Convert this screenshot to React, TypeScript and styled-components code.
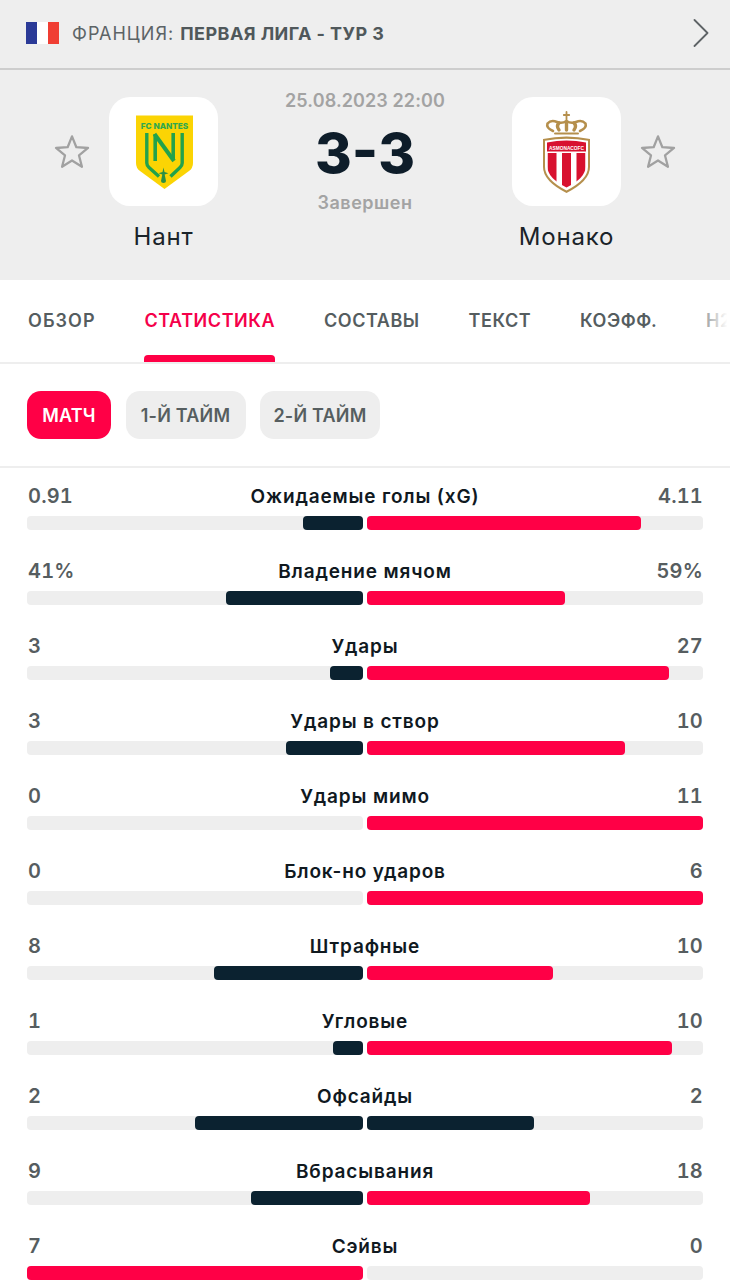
import React from "react";
import styled, { createGlobalStyle } from "styled-components";

const Global = createGlobalStyle`
  html, body { margin: 0; padding: 0; background: #fff; }
  body { width: 730px; height: 1280px; overflow: hidden; font-family: Inter, "Noto Sans", "Liberation Sans", sans-serif; }
  * { box-sizing: border-box; }
`;

const Page = styled.div`
  width: 730px;
  height: 1280px;
  overflow: hidden;
  background: #fff;
`;

const Top = styled.header`
  background: #eeeeee;
  height: 280px;
`;

const LeagueBar = styled.div`
  height: 70px;
  border-bottom: 2px solid #cdcdcd;
  display: flex;
  align-items: center;
  padding: 0 21px 2px 26px;
`;

const Flag = styled.div`
  width: 33px;
  height: 22px;
  display: flex;
  flex: none;
  margin-right: 13px;
`;

const FlagBand = styled.span<{ $c: string }>`
  flex: 1;
  background: ${(p) => p.$c};
`;

const LeagueText = styled.div`
  flex: 1;
  font-size: 18px;
  letter-spacing: 1px;
  color: #5c6366;
  white-space: nowrap;
  b { font-weight: 700; color: #50585b; letter-spacing: 0.42px; }
`;

const MatchGrid = styled.section`
  display: grid;
  grid-template-columns: 36px 109px 1fr 109px 36px;
  column-gap: 19px;
  padding: 20px 54px 0;
`;

const StarCell = styled.div`
  height: 109px;
  margin-top: 7px;
  display: flex;
  align-items: center;
  justify-content: center;
`;

const Team = styled.div`
  margin-top: 7px;
  display: flex;
  flex-direction: column;
  align-items: center;
`;

const Tile = styled.div`
  width: 109px;
  height: 109px;
  background: #fff;
  border-radius: 21px;
`;

const TeamName = styled.div`
  margin-top: 16px;
  font-size: 24px;
  line-height: 30px;
  letter-spacing: 0.8px;
  color: #1a2329;
  white-space: nowrap;
`;

const Center = styled.div`
  display: flex;
  flex-direction: column;
  align-items: center;
`;

const DateText = styled.div`
  font-size: 18px;
  line-height: 22px;
  font-weight: 600;
  letter-spacing: 0.1px;
  color: #a3a3a3;
  white-space: nowrap;
`;

const Score = styled.div`
  margin-top: 6px;
  height: 70px;
  font-size: 55px;
  line-height: 70px;
  font-weight: 800;
  letter-spacing: 0;
  color: #0e1d2a;
  white-space: nowrap;
  transform: scaleX(1.02);
`;

const StatusText = styled.div`
  margin-top: 4px;
  font-size: 18px;
  line-height: 22px;
  font-weight: 600;
  letter-spacing: 0.5px;
  color: #a3a3a3;
`;

const Tabs = styled.nav`
  position: relative;
  height: 84px;
  border-bottom: 2px solid #eeeeee;
  display: flex;
  gap: 48.8px;
  padding: 0 0 0 28px;
  overflow: hidden;
`;

const Tab = styled.div<{ $active?: boolean }>`
  position: relative;
  height: 82px;
  padding-top: 30px;
  font-size: 18px;
  line-height: 22px;
  font-weight: 600;
  letter-spacing: 0.55px;
  color: ${(p) => (p.$active ? "#f5004a" : "#555d5f")};
  white-space: nowrap;
  flex: none;
  &:first-child { letter-spacing: 1.05px; }
  ${(p) =>
    p.$active
      ? `&::after {
    content: "";
    position: absolute;
    left: 0;
    right: 0;
    bottom: 0;
    height: 7px;
    background: #ff0046;
    border-radius: 4px 4px 0 0;
  }`
      : ""}
`;

const TabFade = styled.div`
  position: absolute;
  top: 0;
  right: 0;
  width: 26px;
  height: 80px;
  background: linear-gradient(to right, rgba(255, 255, 255, 0.4), #fff 90%);
`;

const Periods = styled.div`
  height: 104px;
  border-bottom: 2px solid #eeeeee;
  display: flex;
  gap: 14.5px;
  padding: 27px 0 0 27px;
`;

const Chip = styled.div<{ $active?: boolean }>`
  width: ${(p) => (p.$active ? "84px" : "120px")};
  height: 48px;
  border-radius: 14px;
  display: flex;
  align-items: center;
  justify-content: center;
  font-size: 18px;
  font-weight: 600;
  letter-spacing: 0.2px;
  white-space: nowrap;
  background: ${(p) => (p.$active ? "#ff0046" : "#eeeeee")};
  color: ${(p) => (p.$active ? "#fff" : "#565e60")};
`;

const Stats = styled.div`
  padding: 15px 27px 0;
  display: flex;
  flex-direction: column;
  gap: 14px;
`;

const StatRow = styled.div`
  height: 61px;
`;

const StatHead = styled.div`
  display: grid;
  grid-template-columns: 1fr auto 1fr;
  align-items: center;
  height: 26px;
  margin-bottom: 7px;
`;

const StatValue = styled.span<{ $right?: boolean }>`
  font-size: 20px;
  font-weight: 600;
  letter-spacing: 0.2px;
  font-variant-numeric: tabular-nums;
  color: #565d60;
  padding-left: 1px;
  text-align: ${(p) => (p.$right ? "right" : "left")};
`;

const StatLabel = styled.span`
  font-size: 19px;
  font-weight: 600;
  letter-spacing: 0.85px;
  color: #10191f;
  white-space: nowrap;
`;

const Bars = styled.div`
  display: flex;
  gap: 4px;
`;

const Track = styled.div<{ $right?: boolean }>`
  flex: 1;
  height: 14px;
  border-radius: 4px;
  background: #eeeeee;
  display: flex;
  justify-content: ${(p) => (p.$right ? "flex-start" : "flex-end")};
`;

const Fill = styled.div<{ $c: "dark" | "red" }>`
  height: 100%;
  border-radius: 4px;
  background: ${(p) => (p.$c === "dark" ? "#0b2230" : "#ff0046")};
`;

const Star = () => (
  <svg width="38" height="37" viewBox="0 0 38 37" fill="none">
    <path
      d="M19 2.5 L23.6 14 L35.9 14.8 L26.4 22.7 L29.5 34.6 L19 28 L8.5 34.6 L11.6 22.7 L2.1 14.8 L14.4 14 Z"
      stroke="#a1a1a1"
      strokeWidth="2.4"
      strokeLinejoin="round"
    />
  </svg>
);

const Chevron = () => (
  <svg width="16" height="28" viewBox="0 0 16 28" fill="none">
    <path d="M1.5 1 L14.5 14 L1.5 27" stroke="#5e6366" strokeWidth="1.8" strokeLinecap="round" strokeLinejoin="round" />
  </svg>
);

const NantesLogo = () => (
  <svg width="109" height="109" viewBox="0 0 109 109">
    <path d="M27 18.5 H84 V66 Q84 71 80 74 L55.5 92 L31 74 Q27 71 27 66 Z" fill="#fbd404" />
    <text x="55.5" y="31.5" textAnchor="middle" fontFamily="Inter, sans-serif" fontWeight="800" fontSize="8.2" fill="#2fa84f">FC NANTES</text>
    <g fill="none" stroke="#22a24c" strokeWidth="3.4">
      <path d="M37.8 36 V66 Q37.8 68.5 40 70.5 L50 79.5" />
      <path d="M73.2 36 V66 Q73.2 68.5 71 70.5 L61.5 79.5" />
      <path d="M46.2 64 V37" strokeWidth="3.6" />
      <path d="M64.2 63 V36" strokeWidth="3.6" />
      <path d="M45.5 37 L65 64" strokeWidth="4" />
    </g>
    <path d="M54.5 70.5 L55.5 75 L59.5 76.2 L55.7 77.4 L57 84 Q57 86 54.5 86 Q52 86 52 84 L53.3 77.4 L49.5 76.2 L53.5 75 Z" fill="#2b8f45" />
  </svg>
);

const MonacoLogo = () => (
  <svg width="109" height="109" viewBox="0 0 109 109">
    <defs>
      <clipPath id="inner">
        <path d="M35.5 56 H73.5 V70 Q73.5 81 54.5 90.5 Q35.5 81 35.5 70 Z" />
      </clipPath>
    </defs>
    <g fill="none" stroke="#b58f4c" strokeLinecap="round">
      <path d="M54.5 15 V23 M51.8 18 H57.2" strokeWidth="1.8" />
      <path d="M41 34 Q34 31 35.5 26.5 Q39 22.5 45 25 Q50 27 54.5 24 Q59 27 64 25 Q70 22.5 73.5 26.5 Q75 31 68 34" strokeWidth="2.6" />
      <path d="M47 33 Q44 29 47 26 M62 33 Q65 29 62 26 M54.5 33 V25" strokeWidth="3.4" />
      <path d="M43 36.5 H66" strokeWidth="2" />
    </g>
    <path d="M31 42 Q54.5 37 78 42 V70 Q78 84 54.5 96 Q31 84 31 70 Z" fill="#b58f4c" />
    <path d="M33 43.8 Q54.5 39.5 76 43.8 V70 Q76 82.5 54.5 93.5 Q33 82.5 33 70 Z" fill="#fff" />
    <path d="M35 45.5 Q54.5 41.5 74 45.5 V54.5 H35 Z" fill="#d8112f" />
    <text x="54.5" y="52.5" textAnchor="middle" fontFamily="Liberation Sans, sans-serif" fontWeight="700" fontSize="6.2" fill="#fff" textLength="35" lengthAdjust="spacingAndGlyphs">ASMONACOFC</text>
    <g clipPath="url(#inner)" fill="#d8112f">
      <rect x="35.5" y="56" width="9" height="36" />
      <rect x="50" y="56" width="9" height="36" />
      <rect x="64.5" y="56" width="9" height="36" />
    </g>
  </svg>
);

type Stat = { name: string; l: string; r: string; lw: number; rw: number; lc?: "dark" | "red"; rc?: "dark" | "red" };

const stats: Stat[] = [
  { name: "Ожидаемые голы (xG)", l: "0.91", r: "4.11", lw: 60, rw: 274 },
  { name: "Владение мячом", l: "41%", r: "59%", lw: 137, rw: 198 },
  { name: "Удары", l: "3", r: "27", lw: 33, rw: 302 },
  { name: "Удары в створ", l: "3", r: "10", lw: 77, rw: 258 },
  { name: "Удары мимо", l: "0", r: "11", lw: 0, rw: 336 },
  { name: "Блок-но ударов", l: "0", r: "6", lw: 0, rw: 336 },
  { name: "Штрафные", l: "8", r: "10", lw: 149, rw: 186 },
  { name: "Угловые", l: "1", r: "10", lw: 30, rw: 305 },
  { name: "Офсайды", l: "2", r: "2", lw: 168, rw: 167, rc: "dark" },
  { name: "Вбрасывания", l: "9", r: "18", lw: 112, rw: 223 },
  { name: "Сэйвы", l: "7", r: "0", lw: 336, rw: 0, lc: "red" },
];

const tabs = ["ОБЗОР", "СТАТИСТИКА", "СОСТАВЫ", "ТЕКСТ", "КОЭФФ.", "H2H"];

export default function App() {
  return (
    <Page>
      <Global />
      <Top>
        <LeagueBar>
          <Flag>
            <FlagBand $c="#2b3a97" />
            <FlagBand $c="#ffffff" />
            <FlagBand $c="#f03e33" />
          </Flag>
          <LeagueText>
            ФРАНЦИЯ: <b>ПЕРВАЯ ЛИГА - ТУР 3</b>
          </LeagueText>
          <Chevron />
        </LeagueBar>
        <MatchGrid>
          <StarCell>
            <Star />
          </StarCell>
          <Team>
            <Tile>
              <NantesLogo />
            </Tile>
            <TeamName>Нант</TeamName>
          </Team>
          <Center>
            <DateText>25.08.2023 22:00</DateText>
            <Score>3-3</Score>
            <StatusText>Завершен</StatusText>
          </Center>
          <Team>
            <Tile>
              <MonacoLogo />
            </Tile>
            <TeamName>Монако</TeamName>
          </Team>
          <StarCell>
            <Star />
          </StarCell>
        </MatchGrid>
      </Top>
      <Tabs>
        {tabs.map((t) => (
          <Tab key={t} $active={t === "СТАТИСТИКА"}>
            {t}
          </Tab>
        ))}
        <TabFade />
      </Tabs>
      <Periods>
        <Chip $active>МАТЧ</Chip>
        <Chip>1-Й ТАЙМ</Chip>
        <Chip>2-Й ТАЙМ</Chip>
      </Periods>
      <Stats>
        {stats.map((s) => (
          <StatRow key={s.name}>
            <StatHead>
              <StatValue>{s.l}</StatValue>
              <StatLabel>{s.name}</StatLabel>
              <StatValue $right>{s.r}</StatValue>
            </StatHead>
            <Bars>
              <Track>
                <Fill $c={s.lc ?? "dark"} style={{ width: s.lw }} />
              </Track>
              <Track $right>
                <Fill $c={s.rc ?? "red"} style={{ width: s.rw }} />
              </Track>
            </Bars>
          </StatRow>
        ))}
      </Stats>
    </Page>
  );
}
